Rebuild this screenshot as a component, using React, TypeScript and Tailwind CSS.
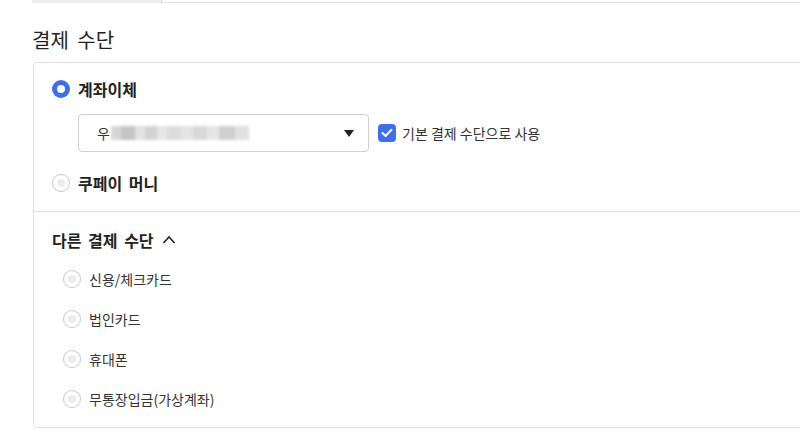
import React from "react";

const FONT = "font-['Noto_Sans_CJK_KR','Noto_Sans',sans-serif]";

function Radio({ checked }: { checked?: boolean }) {
  if (checked) {
    return (
      <span className="w-[18px] h-[18px] rounded-full bg-[#3d6ef0] flex items-center justify-center shrink-0">
        <span className="w-[8px] h-[8px] rounded-full bg-white" />
      </span>
    );
  }
  return (
    <span className="w-[18px] h-[18px] rounded-full border border-[#c8c8c8] bg-white flex items-center justify-center shrink-0">
      <span className="w-[8px] h-[8px] rounded-full bg-[#ececec]" />
    </span>
  );
}

const blurBlocks = [
  { w: 10, c: "bg-[#d6d6d6]" },
  { w: 14, c: "bg-[#c4c4c4]" },
  { w: 10, c: "bg-[#e2e2e2]" },
  { w: 12, c: "bg-[#d2d2d2]" },
  { w: 10, c: "bg-[#e6e6e6]" },
  { w: 14, c: "bg-[#dcdcdc]" },
  { w: 12, c: "bg-[#e4e4e4]" },
  { w: 14, c: "bg-[#d8d8d8]" },
  { w: 12, c: "bg-[#e6e6e6]" },
  { w: 16, c: "bg-[#cfcfcf]" },
  { w: 14, c: "bg-[#e0e0e0]" },
];

export default function App() {
  const others = ["신용/체크카드", "법인카드", "휴대폰", "무통장입금(가상계좌)"];

  return (
    <div className={`w-[800px] h-[437px] overflow-hidden bg-white text-[#222] ${FONT}`}>
      {/* tab strip remnant */}
      <div className="flex h-[4px]">
        <div className="w-[32px]" />
        <div className="w-[130px] h-[3px] bg-[#ececec] border-r border-[#d8d8d8]" />
        <div className="flex-1 border-b border-[#e2e2e2] h-[3px]" />
      </div>

      <h2 className="ml-[32px] mt-[22px] text-[20px] leading-[28px] font-normal [word-spacing:4px]">결제 수단</h2>

      <div className="ml-[33px] mt-[8px] w-[800px] border border-[#e0e0e0] rounded-[4px]">
        {/* main methods */}
        <div className="pl-[18px] pt-[15px] pb-[17px]">
          <div className="flex items-center gap-[8px] h-[22px]">
            <Radio checked />
            <span className="text-[16px] font-bold [word-spacing:3px]">계좌이체</span>
          </div>
          <div className="flex items-center mt-[14px] ml-[26px]">
            <div className="w-[291px] h-[38px] border border-[#cfcfcf] rounded-[4px] flex items-center pl-[18px] pr-[14px]">
              <span className="text-[14px] text-[#333]">우</span>
              <div className="flex items-center h-[22px] ml-[1px] blur-[1.5px]">
                {blurBlocks.map((b, i) => (
                  <div key={i} className={`h-[14px] ${b.c}`} style={{ width: b.w }} />
                ))}
              </div>
              <svg className="ml-auto" width="10" height="7" viewBox="0 0 10 7">
                <path d="M0 0 H10 L5 7 Z" fill="#222" />
              </svg>
            </div>
            <span className="ml-[9px] w-[18px] h-[18px] rounded-[4px] bg-[#3d6ef0] flex items-center justify-center">
              <svg width="12" height="10" viewBox="0 0 12 10">
                <path d="M1.5 5 L4.6 8 L10.5 1.8" fill="none" stroke="#fff" strokeWidth="2" strokeLinecap="round" strokeLinejoin="round" />
              </svg>
            </span>
            <span className="ml-[6px] text-[14px] text-[#333]">기본 결제 수단으로 사용</span>
          </div>
          <div className="flex items-center gap-[8px] h-[22px] mt-[20px]">
            <Radio />
            <span className="text-[16px] font-bold [word-spacing:3px]">쿠페이 머니</span>
          </div>
        </div>

        {/* other methods */}
        <div className="border-t border-[#e0e0e0] pl-[18px] pt-[17px] pb-[8px]">
          <div className="flex items-center h-[22px] gap-[7px]">
            <span className="text-[16px] font-bold [word-spacing:3px]">다른 결제 수단</span>
            <svg width="16" height="16" viewBox="0 0 16 16">
              <path d="M2.5 11 L8 5 L13.5 11" fill="none" stroke="#222" strokeWidth="1.6" />
            </svg>
          </div>
          <div className="mt-[8px] pl-[11px]">
            {others.map((o) => (
              <div key={o} className="flex items-center gap-[8px] h-[40px]">
                <Radio />
                <span className="text-[14px] text-[#333]">{o}</span>
              </div>
            ))}
          </div>
        </div>
      </div>
    </div>
  );
}
